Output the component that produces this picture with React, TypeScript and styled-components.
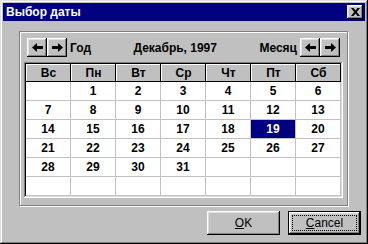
import React from 'react';
import styled, { createGlobalStyle } from 'styled-components';

const GlobalStyle = createGlobalStyle`
  html, body {
    margin: 0;
    padding: 0;
    background: #c0c0c0;
  }
  body {
    font-family: "Liberation Sans", Arial, sans-serif;
  }
`;

const raised = `
  background: #c0c0c0;
  box-shadow: inset -1px -1px #000, inset 1px 1px #fff, inset -2px -2px #808080, inset 2px 2px #dfdfdf;
`;

const Window = styled.div`
  width: 368px;
  height: 244px;
  box-sizing: border-box;
  padding: 3px;
  background: #c0c0c0;
  box-shadow: inset -1px -1px #000, inset 1px 1px #dfdfdf, inset -2px -2px #808080, inset 2px 2px #fff;
  display: flex;
  flex-direction: column;
`;

const TitleBar = styled.div`
  height: 18px;
  background: #000080;
  display: flex;
  align-items: center;
  justify-content: space-between;
  padding: 0 2px 0 3px;
`;

const TitleText = styled.span`
  color: #fff;
  font-weight: bold;
  font-size: 12px;
`;

const CloseButton = styled.div`
  ${raised}
  width: 16px;
  height: 14px;
  display: flex;
  align-items: center;
  justify-content: center;
`;

const GroupBox = styled.div`
  margin: 10px 0 0 16px;
  width: 329px;
  height: 175px;
  box-sizing: border-box;
  border: 1px solid #808080;
  box-shadow: inset 1px 1px #fff, 1px 1px #fff;
  padding: 6px 4px 0 4px;
`;

const NavRow = styled.div`
  height: 19px;
  display: flex;
  align-items: center;
  padding: 0 3px;
  margin-bottom: 5px;
`;

const ArrowPair = styled.div`
  display: flex;
`;

const ArrowButton = styled.div`
  ${raised}
  width: 20px;
  height: 19px;
  display: flex;
  align-items: center;
  justify-content: center;
`;

const NavLabel = styled.span<{ $grow?: boolean }>`
  font-size: 12px;
  font-weight: bold;
  color: #000;
  margin: 0 3px;
  ${p => p.$grow && 'flex: 1; text-align: center;'}
`;

const GridBox = styled.div`
  height: 136px;
  box-sizing: border-box;
  padding: 2px;
  background: #fff;
  box-shadow: inset -1px -1px #fff, inset 1px 1px #808080, inset -2px -2px #dfdfdf, inset 2px 2px #000;
  display: grid;
  grid-template-columns: repeat(7, 1fr);
  grid-template-rows: 18px repeat(6, 19px);
`;

const HeadCell = styled.div`
  background: #c0c0c0;
  box-shadow: inset -1px -1px #000, inset 1px 1px #fff;
  display: flex;
  align-items: center;
  justify-content: center;
  font-size: 12px;
  font-weight: bold;
  color: #000;
`;

const DayCell = styled.div<{ $selected?: boolean }>`
  box-sizing: border-box;
  border-right: 1px solid #c0c0c0;
  border-bottom: 1px solid #c0c0c0;
  background: ${p => (p.$selected ? '#000080' : '#fff')};
  color: ${p => (p.$selected ? '#fff' : '#000')};
  display: flex;
  align-items: center;
  justify-content: center;
  font-size: 12px;
  font-weight: bold;
`;

const ButtonRow = styled.div`
  display: flex;
  justify-content: flex-end;
  gap: 8px;
  margin-top: 5px;
  padding-right: 4px;
`;

const DialogButton = styled.div<{ $default?: boolean }>`
  ${raised}
  width: 73px;
  height: 24px;
  box-sizing: border-box;
  display: flex;
  align-items: center;
  justify-content: center;
  font-size: 12px;
  color: #000;
  position: relative;
  ${p =>
    p.$default &&
    `
    box-shadow: inset 0 0 0 1px #000, inset -2px -2px #000, inset 2px 2px #fff, inset -3px -3px #808080, inset 3px 3px #dfdfdf;
  `}
`;

const FocusRing = styled.div`
  position: absolute;
  inset: 4px;
  border: 1px dotted #000;
`;

const Arrow = ({ dir }: { dir: 'left' | 'right' }) => (
  <svg width="11" height="9" viewBox="0 0 11 9" style={{ transform: dir === 'right' ? 'scaleX(-1)' : undefined }}>
    <polygon points="0,4.5 5,0 5,9" fill="#000" />
    <rect x="5" y="3" width="6" height="3" fill="#000" />
  </svg>
);

const CloseIcon = () => (
  <svg width="9" height="8" viewBox="0 0 9 8">
    <path d="M0 0h2.5l2 2.5 2-2.5h2.5l-3.2 4 3.2 4h-2.5l-2-2.5-2 2.5h-2.5l3.2-4z" fill="#000" />
  </svg>
);

const weekDays = ['Вс', 'Пн', 'Вт', 'Ср', 'Чт', 'Пт', 'Сб'];

const App = () => {
  // December 1997 starts on Monday, so cell index == day number
  const cells: (number | null)[] = [];
  for (let i = 0; i < 42; i++) {
    cells.push(i >= 1 && i <= 31 ? i : null);
  }

  return (
    <>
      <GlobalStyle />
      <Window>
        <TitleBar>
          <TitleText>Выбор даты</TitleText>
          <CloseButton>
            <CloseIcon />
          </CloseButton>
        </TitleBar>
        <GroupBox>
          <NavRow>
            <ArrowPair>
              <ArrowButton><Arrow dir="left" /></ArrowButton>
              <ArrowButton><Arrow dir="right" /></ArrowButton>
            </ArrowPair>
            <NavLabel>Год</NavLabel>
            <NavLabel $grow>Декабрь, 1997</NavLabel>
            <NavLabel>Месяц</NavLabel>
            <ArrowPair>
              <ArrowButton><Arrow dir="left" /></ArrowButton>
              <ArrowButton><Arrow dir="right" /></ArrowButton>
            </ArrowPair>
          </NavRow>
          <GridBox>
            {weekDays.map(d => (
              <HeadCell key={d}>{d}</HeadCell>
            ))}
            {cells.map((d, i) => (
              <DayCell key={i} $selected={d === 19}>
                {d ?? ''}
              </DayCell>
            ))}
          </GridBox>
        </GroupBox>
        <ButtonRow>
          <DialogButton>
            <span><u>O</u>K</span>
          </DialogButton>
          <DialogButton $default>
            <FocusRing />
            <span><u>C</u>ancel</span>
          </DialogButton>
        </ButtonRow>
      </Window>
    </>
  );
};

export default App;
